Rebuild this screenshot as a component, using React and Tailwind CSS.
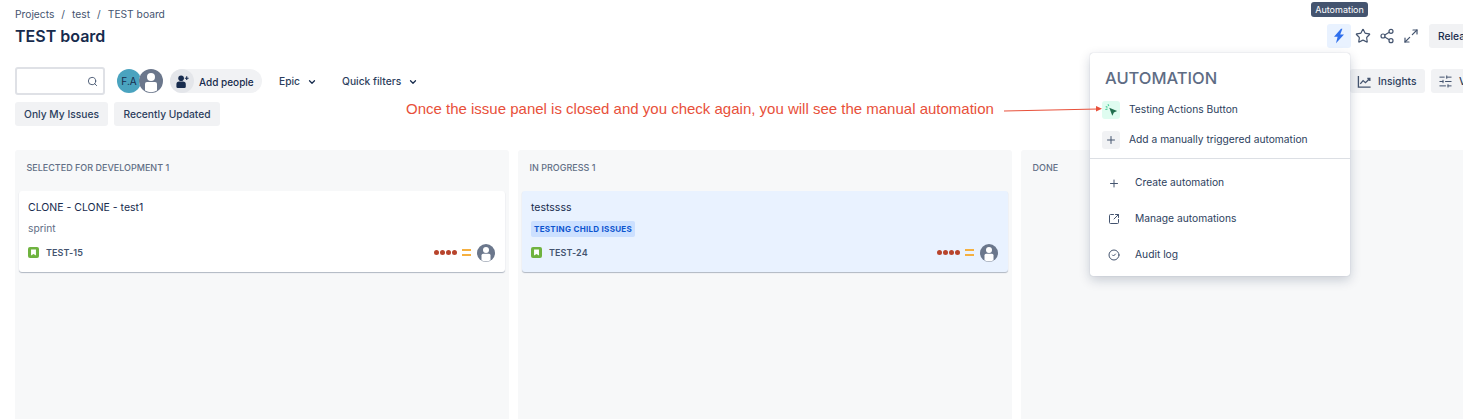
import {
  ChevronDown,
  CircleCheck,
  Maximize2,
  Plus,
  Search,
  Share2,
  SlidersHorizontal,
  SquareArrowOutUpRight,
  Star,
} from "lucide-react";

function UserAvatar({ size = "w-[18px] h-[18px]" }) {
  return (
    <svg viewBox="0 0 24 24" className={`${size} shrink-0`}>
      <circle cx="12" cy="12" r="12" fill="#6b778c" />
      <circle cx="12" cy="8" r="4" fill="#fff" />
      <path d="M6 15a2 2 0 0 1 2-2h8a2 2 0 0 1 2 2v6.5a12 12 0 0 1-12 0z" fill="#fff" />
    </svg>
  );
}

function PriorityDots() {
  return (
    <div className="flex items-center gap-[5px]">
      <div className="flex gap-[1px]">
        <span className="w-[5px] h-[5px] rounded-full bg-[#b8442c]" />
        <span className="w-[5px] h-[5px] rounded-full bg-[#b8442c]" />
        <span className="w-[5px] h-[5px] rounded-full bg-[#b8442c]" />
        <span className="w-[5px] h-[5px] rounded-full bg-[#b8442c]" />
      </div>
      <div className="flex flex-col gap-[3px]">
        <span className="w-[9px] h-[2px] bg-[#f5b040]" />
        <span className="w-[9px] h-[2px] bg-[#f5b040]" />
      </div>
    </div>
  );
}

function StoryIcon() {
  return (
    <span className="w-[11px] h-[11px] rounded-[2px] bg-[#6fb33f] flex items-center justify-center">
      <svg viewBox="0 0 8 8" className="w-[7px] h-[7px]">
        <path d="M1.2 0.6h5.6v6.8L4 5.6 1.2 7.4z" fill="#fff" />
      </svg>
    </span>
  );
}

function IssueCard({ title, issueKey, selected, children }) {
  return (
    <div
      className={`mx-[4px] rounded-[3px] pt-[10px] pb-[10px] pl-[9px] pr-[10px] shadow-[0_1px_1px_rgba(9,30,66,0.3)] ${
        selected ? "bg-[#e9f2ff]" : "bg-white"
      }`}
    >
      <p className="text-[10.5px] leading-[14px] text-[#172b4d]">{title}</p>
      <div className="h-[28px]">{children}</div>
      <div className="flex items-center justify-between h-[19px]">
        <div className="flex items-center gap-[7px]">
          <StoryIcon />
          <span className="text-[9px] font-semibold tracking-[0.1px] text-[#44546f]">{issueKey}</span>
        </div>
        <div className="flex items-center gap-[6px]">
          <PriorityDots />
          <UserAvatar />
        </div>
      </div>
    </div>
  );
}

function Column({ title, children }) {
  return (
    <div className="w-[494px] h-[269px] rounded-t-[3px] bg-[#f7f8f9]">
      <h3 className="h-[41px] px-[11.5px] pt-[11px] text-[9px] leading-[14px] font-medium text-[#626f86]">
        {title}
      </h3>
      {children}
    </div>
  );
}

function MenuItem({ icon, children }) {
  return (
    <div className="h-[36px] flex items-center gap-[15px] pl-[18px] text-[10.25px] text-[#44546f]">
      <span className="w-[12px] flex justify-center">{icon}</span>
      <span className="text-[#2c3e5d]">{children}</span>
    </div>
  );
}

export default function App() {
  return (
    <div className="relative w-[1463px] h-[419px] overflow-hidden bg-white font-['Inter',sans-serif]">
      <div className="w-[1530px] px-[15px] pt-[7px]">
        {/* header */}
        <div className="flex justify-between">
          <div>
            <div className="flex gap-[7px] text-[10.25px] leading-[15px] text-[#44546f]">
              <span>Projects</span>
              <span>/</span>
              <span>test</span>
              <span>/</span>
              <span>TEST board</span>
            </div>
            <h1 className="mt-[2px] text-[16px] leading-[24px] font-semibold text-[#172b4d]">TEST board</h1>
          </div>
          <div className="flex items-center mt-[17px] h-[24px]">
            <span className="w-[24px] h-[24px] rounded-[3px] bg-[#e9f2ff] flex items-center justify-center">
              <svg viewBox="0 0 16 16" className="w-[16px] h-[16px]">
                <path d="M10 0.8 3 8.8h3.6L5 15.2l8-8.8H9.2L11.4 0.8z" fill="#2f6fed" />
              </svg>
            </span>
            <span className="w-[24px] flex justify-center">
              <Star className="w-[16px] h-[16px] text-[#44546f]" strokeWidth={1.8} />
            </span>
            <span className="w-[24px] flex justify-center">
              <Share2 className="w-[16px] h-[16px] text-[#44546f]" strokeWidth={1.8} />
            </span>
            <span className="w-[24px] flex justify-center">
              <Maximize2 className="w-[16px] h-[16px] text-[#44546f]" strokeWidth={1.8} />
            </span>
            <span className="ml-[6px] w-[86px] h-[24px] rounded-[3px] bg-[#f1f2f4] pl-[9px] text-[10.25px] leading-[24px] font-medium text-[#172b4d]">
              Release
            </span>
          </div>
        </div>

        {/* toolbar */}
        <div className="mt-[19px] flex justify-between">
          <div className="flex items-center h-[28px]">
            <div className="w-[90px] h-[28px] rounded-[3px] border-2 border-[#dfe1e6] flex items-center justify-end pr-[5px]">
              <Search className="w-[11px] h-[11px] text-[#44546f]" />
            </div>
            <div className="ml-[12px] flex items-center">
              <span className="w-[24px] h-[24px] rounded-full bg-[#4aa3bf] flex items-center justify-center text-[10px] text-[#172b4d]">
                F.A
              </span>
              <span className="-ml-[2px] rounded-full bg-white">
                <UserAvatar size="w-[24px] h-[24px]" />
              </span>
            </div>
            <div className="ml-[7px] w-[92px] h-[24px] rounded-full bg-[#f1f2f4] flex items-center">
              <span className="w-[24px] h-[24px] rounded-full bg-[#e4e6ea] flex items-center justify-center">
                <svg viewBox="0 0 16 16" className="w-[15px] h-[15px]">
                  <circle cx="6.5" cy="4.5" r="3" fill="#172b4d" />
                  <path d="M1.5 11a3 3 0 0 1 3-3h4a3 3 0 0 1 3 3v2.5a1.5 1.5 0 0 1-1.5 1.5H3a1.5 1.5 0 0 1-1.5-1.5z" fill="#172b4d" />
                  <path d="M12.5 2.5v4M10.5 4.5h4" stroke="#172b4d" strokeWidth="1.2" />
                </svg>
              </span>
              <span className="ml-[5px] pt-[2px] text-[10px] font-medium text-[#172b4d]">Add people</span>
            </div>
            <div className="ml-[17px] pt-[2px] flex items-center gap-[7px] text-[10.25px] font-medium text-[#2c3e5d]">
              Epic
              <ChevronDown className="w-[10px] h-[10px] text-[#172b4d]" strokeWidth={3} />
            </div>
            <div className="ml-[25px] pt-[2px] flex items-center gap-[7px] text-[10.25px] font-medium text-[#2c3e5d]">
              Quick filters
              <ChevronDown className="w-[10px] h-[10px] text-[#172b4d]" strokeWidth={3} />
            </div>
          </div>
          <div className="flex items-center gap-[6px] h-[28px]">
            <div className="w-[75px] h-[24px] rounded-[3px] bg-[#f1f2f4] flex items-center gap-[6px] pl-[7px] text-[10.25px] font-medium text-[#2c3e5d]">
              <svg viewBox="0 0 16 16" className="w-[15px] h-[15px]" fill="none" stroke="#44546f" strokeWidth="1.4">
                <path d="M1.5 2v12h13" />
                <path d="M3.5 10.5 6.5 7l2.5 2.2L13.5 5M11 4.8h2.7v2.6" />
              </svg>
              <span className="pt-[2px]">Insights</span>
            </div>
            <div className="w-[84px] h-[24px] rounded-[3px] bg-[#f1f2f4] flex items-center gap-[6px] pl-[7px] text-[10.25px] font-medium text-[#2c3e5d] whitespace-nowrap">
              <SlidersHorizontal className="w-[15px] h-[15px] shrink-0 text-[#44546f]" strokeWidth={1.6} />
              <span className="pt-[2px]">View</span>
            </div>
          </div>
        </div>

        {/* filter chips */}
        <div className="mt-[7px] flex gap-[6px]">
          <span className="w-[93px] h-[24px] pt-[2px] rounded-[3px] bg-[#f1f2f4] flex items-center justify-center text-[10.25px] font-medium text-[#2c3e5d]">
            Only My Issues
          </span>
          <span className="w-[106px] h-[24px] pt-[2px] rounded-[3px] bg-[#f1f2f4] flex items-center justify-center text-[10.25px] font-medium text-[#2c3e5d]">
            Recently Updated
          </span>
        </div>

        {/* board */}
        <div className="mt-[24px] flex gap-[9px]">
          <Column title="SELECTED FOR DEVELOPMENT 1">
            <IssueCard title="CLONE - CLONE - test1" issueKey="TEST-15">
              <p className="pt-[6px] text-[10.25px] leading-[14px] text-[#626f86]">sprint</p>
            </IssueCard>
          </Column>
          <Column title="IN PROGRESS 1">
            <IssueCard title="testssss" issueKey="TEST-24" selected>
              <div className="pt-[6px]">
                <span className="block w-fit h-[16px] rounded-[2px] bg-[#cce0ff] px-[3px] text-[8px] leading-[16px] font-bold tracking-[0.3px] text-[#0c55cf]">
                  TESTING CHILD ISSUES
                </span>
              </div>
            </IssueCard>
          </Column>
          <Column title="DONE" />
        </div>
      </div>

      {/* tooltip */}
      <div className="absolute left-[1311px] top-[2px] w-[57px] h-[15px] rounded-[3px] bg-[#44546f] text-center text-[9px] leading-[15px] text-white">
        Automation
      </div>

      {/* automation popup */}
      <div className="absolute left-[1090px] top-[53px] w-[260px] h-[223px] rounded-[3px] bg-white shadow-[0_4px_12px_rgba(9,30,66,0.2),0_0_1px_rgba(9,30,66,0.3)]">
        <h2 className="pl-[15px] pt-[14px] text-[16.5px] leading-[22px] font-medium text-[#5e6c84]">AUTOMATION</h2>
        <div className="mt-[6px] h-[30px] flex items-center gap-[9px] pl-[12px] text-[10.25px] text-[#2c3e5d]">
          <span className="w-[18px] h-[18px] rounded-[3px] bg-[#dffcf0] flex items-center justify-center">
            <svg viewBox="0 0 16 16" className="w-[14px] h-[14px]">
              <path d="M6 5.5 15 9l-3.7 1.8L9.5 14.5z" fill="#216e4e" />
              <path d="M2 4l2 1M4.5 1.5l1 2M1.5 7.5 4 7" stroke="#4bce97" strokeWidth="1.3" fill="none" />
            </svg>
          </span>
          Testing Actions Button
        </div>
        <div className="h-[30px] flex items-center gap-[9px] pl-[12px] text-[10.25px] text-[#2c3e5d]">
          <span className="w-[18px] h-[18px] rounded-[3px] bg-[#f1f2f4] flex items-center justify-center">
            <Plus className="w-[12px] h-[12px] text-[#44546f]" />
          </span>
          Add a manually triggered automation
        </div>
        <div className="mt-[3px] border-t border-[#dcdfe4] pt-[6px]">
          <MenuItem icon={<Plus className="w-[13px] h-[13px]" />}>Create automation</MenuItem>
          <MenuItem icon={<SquareArrowOutUpRight className="w-[12px] h-[12px]" />}>Manage automations</MenuItem>
          <MenuItem icon={<CircleCheck className="w-[12px] h-[12px]" />}>Audit log</MenuItem>
        </div>
      </div>

      {/* annotation */}
      <p className="absolute left-[406px] top-[100px] text-[15px] leading-[18px] whitespace-nowrap text-[#e8503a] font-['Liberation_Sans',sans-serif]">
        Once the issue panel is closed and you check again, you will see the manual automation
      </p>
      <svg className="absolute left-[1000px] top-[100px] w-[105px] h-[20px]" viewBox="0 0 105 20">
        <path d="M4 11 L 98 9" stroke="#e8503a" strokeWidth="1" />
        <path d="M102 8.8 L96 6 L96 11.5 z" fill="#e8503a" />
      </svg>
    </div>
  );
}
